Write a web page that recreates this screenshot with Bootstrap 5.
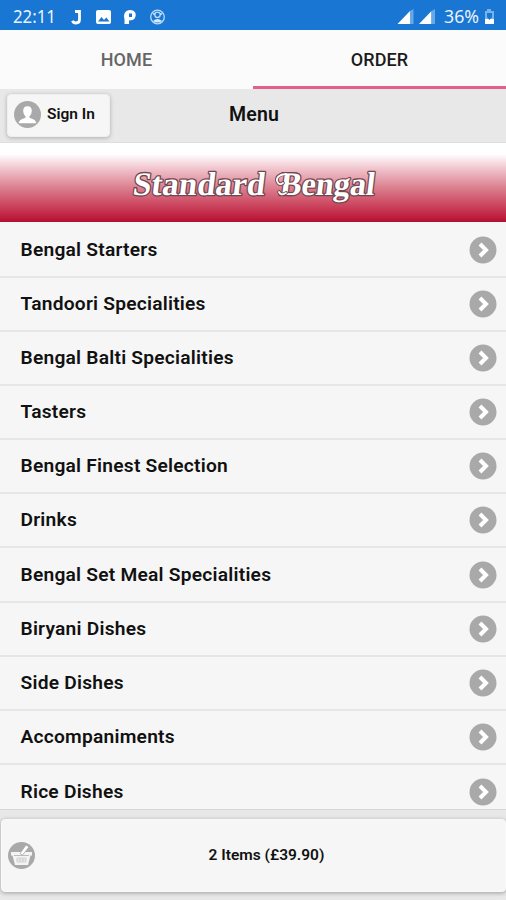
<!DOCTYPE html>
<html lang="en">
<head>
<meta charset="utf-8">
<meta name="viewport" content="width=device-width, initial-scale=1">
<title>Standard Bengal - Menu</title>
<link href="https://cdn.jsdelivr.net/npm/bootstrap@5.3.0/dist/css/bootstrap.min.css" rel="stylesheet">
<style>
body{font-family:Roboto,sans-serif;background:#e8e8e8;color:#111;height:900px;overflow:hidden}
svg{display:block;flex:none}
.statusbar{height:30px;background:#1976d2;color:#e9f3fc;font:17.5px/30px "Noto Sans",sans-serif;padding:1px 11px 0 13px}
.tabs{height:59px;background:#fbfbfb;flex:none}
.tabs a{height:59px;line-height:60px;font-size:18px;font-weight:500;letter-spacing:.1px;color:#666;text-decoration:none}
.tabs a.active{color:#1c1c1c;border-bottom:3px solid #e0628b}
.appbar{height:54px;background:#e8e8e8;border-bottom:1px solid #dedede;display:grid;grid-template-columns:1fr auto 1fr;padding:0 7px}
.appbar h1{font-size:19.5px;font-weight:600;line-height:24px;letter-spacing:.2px;margin:0 0 1px 2px}
.signin{height:43px;width:103px;background:#f6f6f6;border:1px solid #efefef;border-radius:4px;box-shadow:0 1px 4px rgba(0,0,0,.25);font-size:15.5px;font-weight:600;padding:0 0 2px 6px;gap:6px;color:#111}
.banner{height:79px;background:linear-gradient(#fff 0,#fff 14%,#f0c3cc 33%,#dc8493 55%,#cd4a62 77%,#bd1c3c 95%,#b10f30 100%)}
.dishes{height:588px;overflow:hidden;background:#f6f6f6;border-bottom:1px solid #d6d6d6}
.dishes .list-group-item{height:54.1px;background:#f6f6f6;border:0;border-bottom:2px solid #e6e6e6;color:#111;font-size:19.2px;font-weight:600;letter-spacing:.23px;line-height:24px;padding:0 9px 0 20.500px}
.dishes .list-group-item:first-child{height:56px;padding-top:1px}
.basket{height:73px;margin:9px 0 0 1px;background:#f6f6f6;border:1px solid #fafafa;border-radius:4px;box-shadow:0 1px 4px rgba(0,0,0,.32);font-size:15.5px;font-weight:600;padding:0 8px 0 6px;color:#111;display:grid;grid-template-columns:28px 1fr}
</style>
<script src="https://cdn.jsdelivr.net/npm/bootstrap@5.3.0/dist/js/bootstrap.bundle.min.js"></script>
</head>
<body class="d-flex flex-column">
<svg width="0" height="0" class="position-absolute" aria-hidden="true">
  <symbol id="go" viewBox="0 0 28 28"><circle cx="14" cy="14" r="13.5" fill="#a9a9a9"/><path d="M11 8l6 6-6 6" fill="none" stroke="#fff" stroke-width="4"/></symbol>
</svg>
<header class="statusbar d-flex align-items-center flex-shrink-0">
  <svg width="44" height="28"><text x="0" y="21" textLength="43" lengthAdjust="spacingAndGlyphs" fill="#e9f3fc">22:11</text></svg>
  <svg width="110" height="28" viewBox="57 0 110 28" fill="#fff">
    <path d="M75 9.500h4.500v8q0 3.500-3.500 3.500-2.600 0-3.500-2.300" fill="none" stroke="#fff" stroke-width="2.800"/>
    <rect x="96" y="8" width="15" height="14" rx="2"/><path d="M98 19.500l3.500-4.500 2.500 3 2.300-2.500 3.200 4z" fill="#1976d2"/>
    <path fill-rule="evenodd" d="M124.500 17c-1.500-5 1-9 5.500-9s6.500 3 5.500 6.500c-.8 3-3 4-6.500 4v3.500h-4.500zM129 11.500v3.500h3v-3.500z"/>
    <g fill="none" stroke="#b9dcfa" stroke-width="1.300"><circle cx="157.500" cy="15" r="6.800"/><circle cx="157.500" cy="12.800" r="2.700"/></g><path d="M153 19q4.500-4 9 0-4.500 3-9 0z" fill="#d5ebfd"/><circle cx="154" cy="12" r="1" fill="#d5ebfd"/><circle cx="161" cy="12" r="1" fill="#d5ebfd"/>
  </svg>
  <svg class="ms-auto" width="98" height="28" viewBox="397 0 98 28">
    <path d="M397.500 22L410 9v13zM419 22l12.500-13v13z" fill="#fff"/>
    <path d="M410 9l3.500-2v15H410zM431.500 9l3.500-2v15h-3.500z" fill="#66a9e8"/>
    <text x="444" y="21" textLength="35" lengthAdjust="spacingAndGlyphs" fill="#e9f3fc">36%</text>
    <path d="M487 7h4v2h3v13h-9V9h2z" fill="#75b3ed"/><path d="M485 17h9v5h-9z" fill="#fff"/><path d="M487 11h5v4l-2.500 3-2.500-3z" fill="#1976d2"/>
  </svg>
</header>
<nav class="tabs d-flex text-center">
  <a href="#" class="w-50">HOME</a>
  <a href="#" class="w-50 active">ORDER</a>
</nav>
<div class="appbar align-items-center flex-shrink-0">
  <button class="signin btn d-flex align-items-center">
    <svg width="27" height="27" viewBox="0 0 27 27"><circle cx="13.500" cy="13.500" r="13.500" fill="#a9a9a9"/><path d="M13.500 5.300c-3 0-4.400 2-4.300 4.800.1 2.300 1 4 2.300 5.100v1.500C8 18 4.800 18.800 4.800 22.300h17.400c0-3.500-3.200-4.300-6.700-5.600v-1.500c1.300-1.100 2.200-2.800 2.300-5.100.1-2.800-1.300-4.800-4.300-4.800z" fill="#fff"/></svg>
    <span>Sign In</span>
  </button>
  <h1>Menu</h1>
</div>
<div class="banner flex-shrink-0">
  <svg width="506" height="79" viewBox="0 0 506 79" font-family="'Liberation Serif',serif" font-weight="700" font-size="33" fill="#fff" stroke="#704650" stroke-width="2.600" stroke-linejoin="round" paint-order="stroke">
    <g transform="translate(0 52) skewX(-7)">
      <text x="132" y="0" textLength="132" lengthAdjust="spacingAndGlyphs">Standard</text>
      <text x="279" y="0" textLength="95" lengthAdjust="spacingAndGlyphs">Bengal</text>
    </g>
    <path d="M286 50q-5 3-7-1M284 31q-8 1-7 7 2 5 6 2" fill="none" stroke="#704650" stroke-width="3.600" stroke-linecap="round"/>
    <path d="M286 50q-5 3-7-1M286 31q-10 1-9 7 2 5 6 2" fill="none" stroke="#fff" stroke-width="1.800" stroke-linecap="round"/>
  </svg>
</div>
<main class="dishes list-group list-group-flush rounded-0 flex-shrink-0">
  <a class="list-group-item d-flex align-items-center justify-content-between flex-shrink-0">Bengal Starters<svg width="28" height="28"><use href="#go"/></svg></a>
  <a class="list-group-item d-flex align-items-center justify-content-between flex-shrink-0">Tandoori Specialities<svg width="28" height="28"><use href="#go"/></svg></a>
  <a class="list-group-item d-flex align-items-center justify-content-between flex-shrink-0">Bengal Balti Specialities<svg width="28" height="28"><use href="#go"/></svg></a>
  <a class="list-group-item d-flex align-items-center justify-content-between flex-shrink-0">Tasters<svg width="28" height="28"><use href="#go"/></svg></a>
  <a class="list-group-item d-flex align-items-center justify-content-between flex-shrink-0">Bengal Finest Selection<svg width="28" height="28"><use href="#go"/></svg></a>
  <a class="list-group-item d-flex align-items-center justify-content-between flex-shrink-0">Drinks<svg width="28" height="28"><use href="#go"/></svg></a>
  <a class="list-group-item d-flex align-items-center justify-content-between flex-shrink-0">Bengal Set Meal Specialities<svg width="28" height="28"><use href="#go"/></svg></a>
  <a class="list-group-item d-flex align-items-center justify-content-between flex-shrink-0">Biryani Dishes<svg width="28" height="28"><use href="#go"/></svg></a>
  <a class="list-group-item d-flex align-items-center justify-content-between flex-shrink-0">Side Dishes<svg width="28" height="28"><use href="#go"/></svg></a>
  <a class="list-group-item d-flex align-items-center justify-content-between flex-shrink-0">Accompaniments<svg width="28" height="28"><use href="#go"/></svg></a>
  <a class="list-group-item d-flex align-items-center justify-content-between flex-shrink-0">Rice Dishes<svg width="28" height="28"><use href="#go"/></svg></a>
</main>
<footer class="basket align-items-center flex-shrink-0">
  <svg width="27" height="27" viewBox="0 0 27 27"><circle cx="13.500" cy="13.500" r="13.500" fill="#a9a9a9"/><path d="M3 10h21v3.500h-1.500L20 23H7L4.500 13.500H3z" fill="#f4f4f4"/><path d="M12 11.500L18 3l3 2-6.500 8z" fill="#fff" stroke="#a9a9a9" stroke-width=".8"/><path d="M6 13.500h15" stroke="#bbb"/><path d="M9 16v4h9v-4zM12 16v4M15 16v4M9 18h9" fill="none" stroke="#cfcfcf"/></svg>
  <span class="text-center">2 Items (£39.90)</span>
</footer>
</body>
</html>
